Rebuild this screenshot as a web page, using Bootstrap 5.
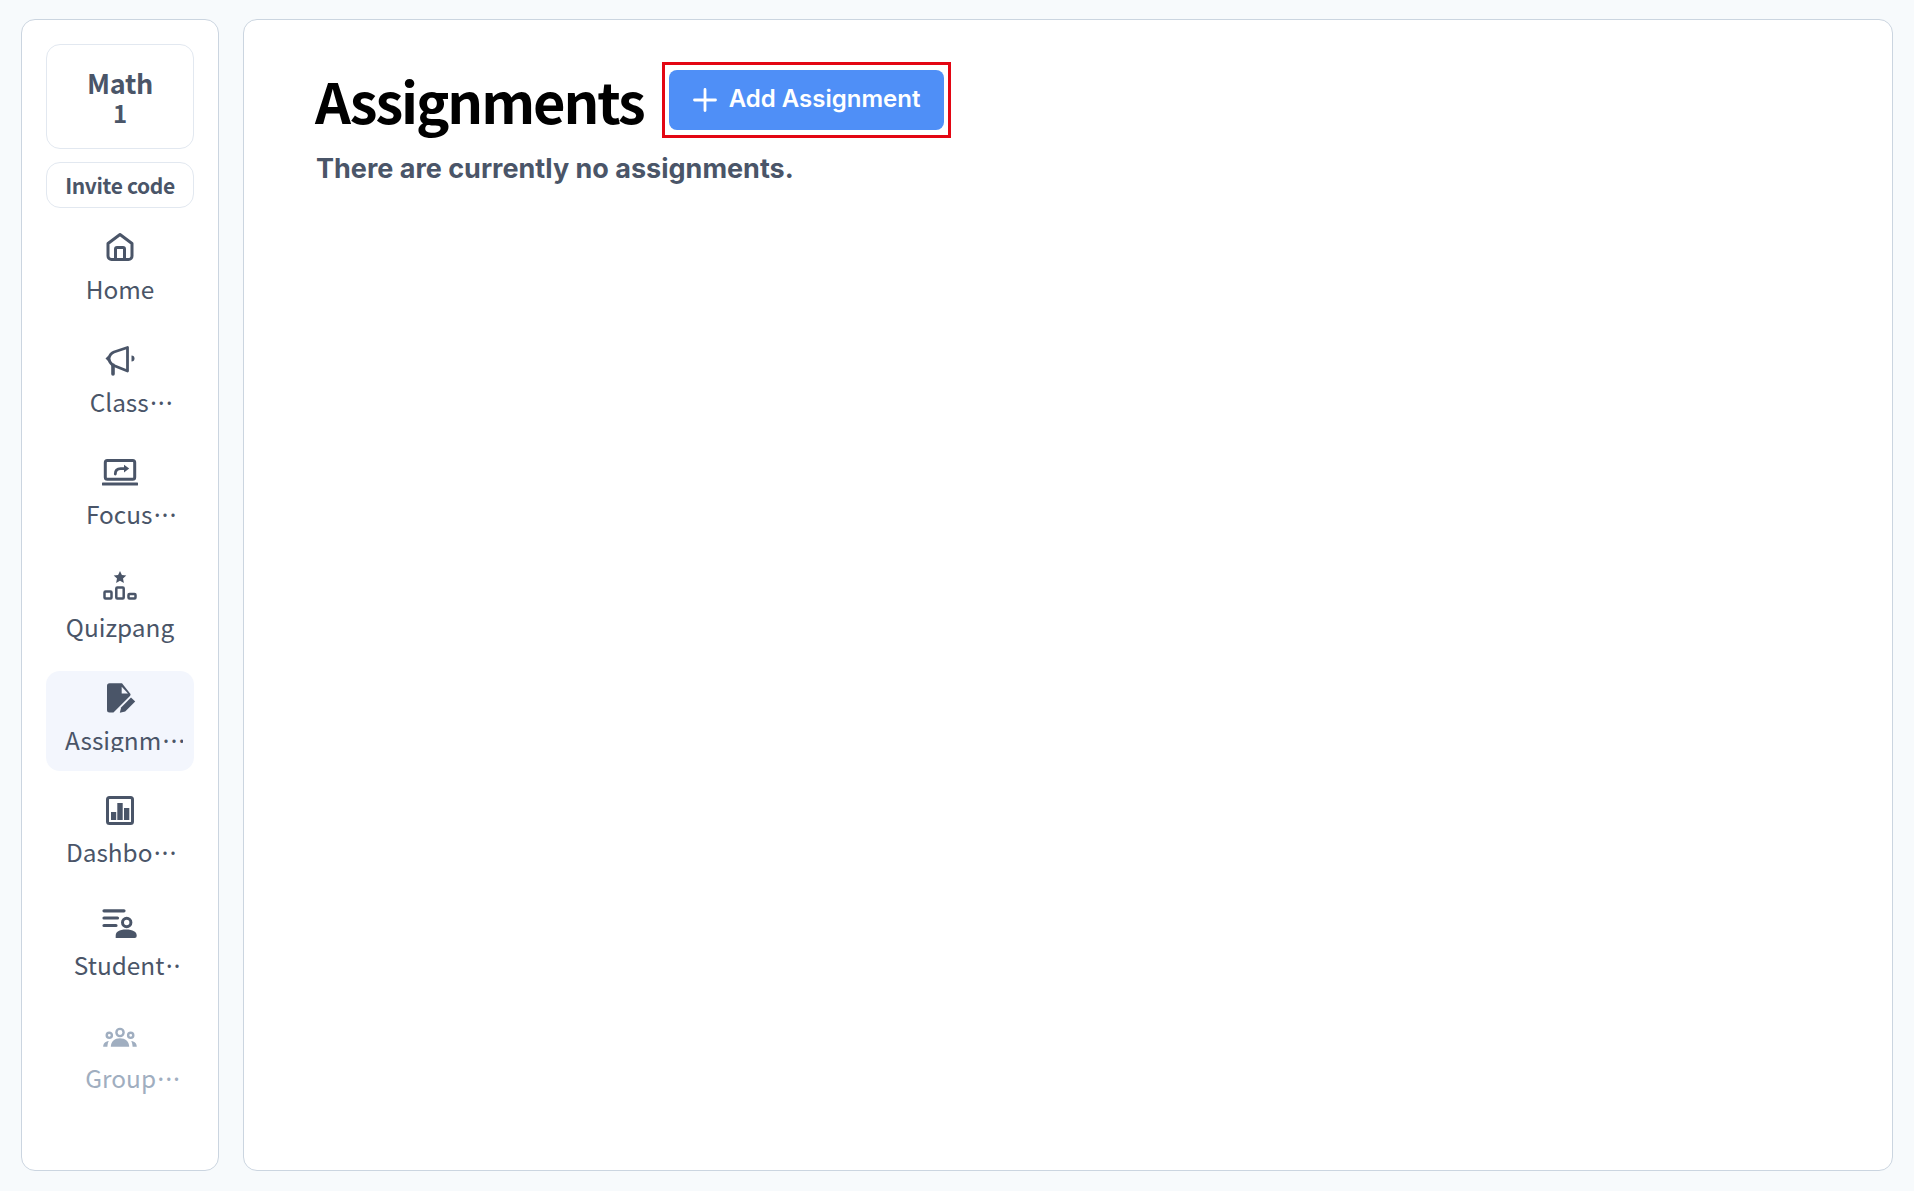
<!DOCTYPE html>
<html lang="en">
<head>
<meta charset="utf-8">
<title>Assignments</title>
<link href="https://cdn.jsdelivr.net/npm/bootstrap@5.3.0/dist/css/bootstrap.min.css" rel="stylesheet">
<style>
html,body{height:100%}
body{background:#f7fafc;padding:19px 21px 20px;font-family:"Noto Sans CJK KR","Noto Sans",sans-serif;color:#4a5568}
.shell{height:100%;gap:24px}
.side-panel{width:198px;flex:none;background:#fff;border:1px solid #cbd5e0;border-radius:14px;padding:24px 24px 0}
.main-panel{background:#fff;border:1px solid #cbd5e0;border-radius:14px;padding:40px 71px}
.class-box{height:105px;border:1px solid #e2e8f0;border-radius:14px;font-weight:700;line-height:1.1}
.class-name{font-size:27px;line-height:32px;letter-spacing:-.3px}
.class-num{font-size:24px;line-height:28px}
.invite-box{height:46px;margin-top:13px;margin-bottom:12px;border:1px solid #e2e8f0;border-radius:14px;font-size:21px;font-weight:700;color:#4a5568;background:#fff;padding:2px 0 0;letter-spacing:-.35px}
.nav-tile{height:100px;margin-bottom:12.7px;padding-top:9px;border-radius:14px;color:#4a5568;text-decoration:none}
.nav-tile svg{display:block;flex:none}
.tile-label{font-size:24.4px;line-height:30px;height:30px;margin-top:9px;white-space:nowrap}
.dots{letter-spacing:-5.8px;margin-left:-2px}
.is-active{background:#f3f6fd}
.is-active .tile-label{overflow:hidden;height:27px}
.is-muted{color:#a0aec0}
.shift-class{padding-left:20px}
.shift-focus{padding-left:20px}
.shift-assign{padding-left:8px}
.shift-dash{padding-left:0}
.shift-student{padding-left:12px}
.shift-group{padding-left:23px}
.page-title{font-size:56px;font-weight:700;color:#000;line-height:80px;margin:0;letter-spacing:-2.1px}
.add-frame{margin-left:18px;border:3px solid #e30613;padding:5px 4px}
.add-btn{height:60px;width:275px;background:#4f8ff7;border:0;border-radius:8px;color:#fff;font-family:Inter,sans-serif;font-weight:600;font-size:24px;padding:0 0 0 24px;gap:12px}
.add-text{margin-bottom:2px}
.empty-note{font-family:Inter,sans-serif;font-weight:700;font-size:27px;line-height:36px;margin:11px 0 0 1px;color:#4a5568}
</style>
</head>
<body>
<div class="shell d-flex">
  <aside class="side-panel d-flex flex-column">
    <div class="class-box d-flex flex-column align-items-center justify-content-center text-center">
      <div class="class-name">Math</div>
      <div class="class-num">1</div>
    </div>
    <button class="invite-box btn" type="button">Invite code</button>

    <a href="#" class="nav-tile d-flex flex-column align-items-center">
      <svg width="36" height="36" viewBox="0 0 36 36" fill="none" stroke="currentColor" stroke-width="3" stroke-linejoin="round"><path d="M6 14.5 18 5.5l12 9V27a3.5 3.5 0 0 1-3.5 3.5h-17A3.5 3.5 0 0 1 6 27z"/><path d="M13.5 30.5V20a1.5 1.5 0 0 1 1.5-1.5h6a1.5 1.5 0 0 1 1.5 1.5v10.5"/></svg>
      <span class="tile-label">Home</span>
    </a>
    <a href="#" class="nav-tile d-flex flex-column align-items-center">
      <svg width="36" height="36" viewBox="0 0 36 36" fill="none" stroke="currentColor" stroke-width="2.8" stroke-linejoin="round" stroke-linecap="round"><path d="M25.5 5.5V29L10.5 23Q7 20 7 16.5 7.5 12 12 10z"/><path d="M11 23v9" stroke-width="3.6"/><path d="M6.5 13.5 3.5 16.5 6.5 19.5z" fill="currentColor" stroke="none"/><path d="M29.5 13.5a3 3 0 0 1 0 6z" fill="currentColor" stroke="none"/></svg>
      <span class="tile-label shift-class">Class<span class="dots">···</span></span>
    </a>
    <a href="#" class="nav-tile d-flex flex-column align-items-center">
      <svg width="36" height="36" viewBox="0 0 36 36" fill="none" stroke="currentColor" stroke-width="3" stroke-linecap="round" stroke-linejoin="round"><rect x="3.3" y="6.5" width="29.4" height="18.8" rx="2"/><path d="M1 30h34" stroke-width="3"/><path d="M13.3 20c0-3.6 2-5.4 5.4-5.4h4" stroke-width="2.8"/><path d="M22 10.8 27.2 14.6 22 18.4z" fill="currentColor" stroke="none"/></svg>
      <span class="tile-label shift-focus">Focus<span class="dots">···</span></span>
    </a>
    <a href="#" class="nav-tile d-flex flex-column align-items-center">
      <svg width="36" height="36" viewBox="0 0 36 36" fill="none" stroke="currentColor" stroke-width="2.5" stroke-linejoin="round"><path d="m18 4 1.9 4.1 4.4.5-3.3 3 .9 4.4-3.9-2.2-3.9 2.2.9-4.4-3.3-3 4.4-.5z" fill="currentColor" stroke="none"/><rect x="2.5" y="24.5" width="7" height="7" rx="1"/><rect x="14.3" y="20.5" width="7.4" height="11" rx="1"/><rect x="26.5" y="27" width="7" height="4.5" rx="1"/></svg>
      <span class="tile-label">Quizpang</span>
    </a>
    <a href="#" class="nav-tile is-active d-flex flex-column align-items-center">
      <svg width="36" height="36" viewBox="0 0 36 36"><path d="M7.5 3.3H20L28.5 14v3L15.5 30.5l-.5 2H7.5A2.5 2.5 0 0 1 5 30V5.8a2.5 2.5 0 0 1 2.5-2.5z" fill="currentColor"/><path d="M19.7 6.7v6.8H26z" fill="#f3f6fd"/><path d="M15 36 36 15" stroke="#f3f6fd" stroke-width="10" fill="none"/><path d="M17.8 32.8l1.3-5.4L29 17.4l4.2 4.2-10 9.9z" fill="currentColor"/></svg>
      <span class="tile-label shift-assign">Assignm<span class="dots">···</span></span>
    </a>
    <a href="#" class="nav-tile d-flex flex-column align-items-center">
      <svg width="36" height="36" viewBox="0 0 36 36" fill="currentColor"><rect x="5.5" y="5.5" width="25" height="26" rx="2" fill="none" stroke="currentColor" stroke-width="3"/><rect x="9" y="20" width="5.2" height="8"/><rect x="15.3" y="11" width="5.4" height="17"/><rect x="22" y="16" width="5.3" height="12"/></svg>
      <span class="tile-label shift-dash">Dashbo<span class="dots">···</span></span>
    </a>
    <a href="#" class="nav-tile d-flex flex-column align-items-center">
      <svg width="36" height="36" viewBox="0 0 36 36" fill="none" stroke="currentColor" stroke-width="3.2" stroke-linecap="round"><path d="M2 5.8h20M2 13h13.5M2 20.5h12"/><circle cx="24.7" cy="17.5" r="4.2" stroke-width="3"/><path d="M13.7 33v-2.5C13.7 27 17 24.5 24 24.5s10.7 2.5 10.7 6V31a2 2 0 0 1-2 2z" fill="currentColor" stroke="none"/></svg>
      <span class="tile-label shift-student">Student<span class="dots">··</span></span>
    </a>
    <a href="#" class="nav-tile is-muted d-flex flex-column align-items-center">
      <svg width="36" height="36" viewBox="0 0 36 36" fill="none" stroke="currentColor" stroke-width="2.4"><circle cx="18" cy="14.5" r="3.6"/><circle cx="7.3" cy="17.3" r="2.6"/><circle cx="28.7" cy="17.3" r="2.6"/><path d="M8.8 28.8c0-5.5 4-8.6 9.2-8.6s9.2 3.1 9.2 8.6z" fill="currentColor" stroke="none"/><path d="M1.2 28.8c0-3 1.6-5.3 5.6-5.8-.9 1.6-1.3 3.6-1.4 5.8zM34.8 28.8c0-3-1.6-5.3-5.6-5.8.9 1.6 1.3 3.6 1.4 5.8z" fill="currentColor" stroke="none"/></svg>
      <span class="tile-label shift-group">Group<span class="dots">···</span></span>
    </a>
  </aside>
  <main class="main-panel flex-grow-1">
    <div class="d-flex align-items-center">
      <h1 class="page-title">Assignments</h1>
      <div class="add-frame">
        <button class="add-btn btn d-flex align-items-center" type="button">
          <svg width="24" height="24" viewBox="0 0 24 24" fill="none" stroke="#fff" stroke-width="2.8" stroke-linecap="round"><path d="M12 1.5v21M1.5 12h21"/></svg>
          <span class="add-text">Add Assignment</span>
        </button>
      </div>
    </div>
    <p class="empty-note">There are currently no assignments.</p>
  </main>
</div>
<script src="https://cdn.jsdelivr.net/npm/bootstrap@5.3.0/dist/js/bootstrap.bundle.min.js"></script>
</body>
</html>
